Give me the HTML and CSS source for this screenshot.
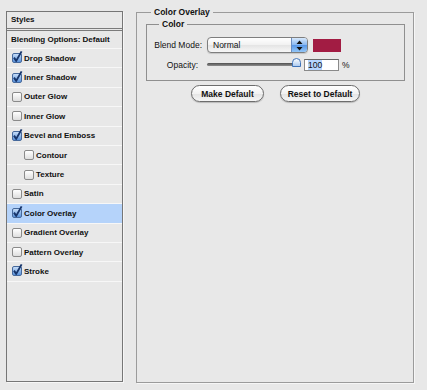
FILE: index.html
```html
<!DOCTYPE html>
<html lang="en">
<head>
    <meta charset="UTF-8">
    <meta name="viewport" content="width=device-width, initial-scale=1.0">
    <title>Layer Style - Color Overlay</title>
    <link rel="stylesheet" href="styles.css">
</head>
<body>
    <div class="styles-panel">
        <div class="panel-head">Styles</div>
        <div class="style-row blending">Blending Options: Default</div>
        <div class="style-row"><span class="check on"><svg width="10" height="10" viewBox="0 0 10 10"><path d="M2 4.6 L4.2 7.9 L9.6 -1.6" /></svg></span>Drop Shadow</div>
        <div class="style-row"><span class="check on"><svg width="10" height="10" viewBox="0 0 10 10"><path d="M2 4.6 L4.2 7.9 L9.6 -1.6" /></svg></span>Inner Shadow</div>
        <div class="style-row"><span class="check"></span>Outer Glow</div>
        <div class="style-row"><span class="check"></span>Inner Glow</div>
        <div class="style-row"><span class="check on"><svg width="10" height="10" viewBox="0 0 10 10"><path d="M2 4.6 L4.2 7.9 L9.6 -1.6" /></svg></span>Bevel and Emboss</div>
        <div class="style-row sub"><span class="check"></span>Contour</div>
        <div class="style-row sub"><span class="check"></span>Texture</div>
        <div class="style-row"><span class="check"></span>Satin</div>
        <div class="style-row active"><span class="check on"><svg width="10" height="10" viewBox="0 0 10 10"><path d="M2 4.6 L4.2 7.9 L9.6 -1.6" /></svg></span>Color Overlay</div>
        <div class="style-row"><span class="check"></span>Gradient Overlay</div>
        <div class="style-row"><span class="check"></span>Pattern Overlay</div>
        <div class="style-row"><span class="check on"><svg width="10" height="10" viewBox="0 0 10 10"><path d="M2 4.6 L4.2 7.9 L9.6 -1.6" /></svg></span>Stroke</div>
    </div>

    <fieldset class="options">
        <legend class="main-legend">Color Overlay</legend>
        <fieldset class="color-group">
            <legend class="group-legend">Color</legend>
            <div class="field-row blend-row">
                <label class="field-label">Blend Mode:</label>
                <div class="popup">
                    <span class="popup-text">Normal</span>
                    <span class="popup-arrows">
                        <svg width="7" height="11" viewBox="0 0 7 11"><path d="M3.5 0.5 L6.5 4 L0.5 4 Z M0.5 7 L6.5 7 L3.5 10.5 Z" fill="#111" /></svg>
                    </span>
                </div>
                <span class="swatch"></span>
            </div>
            <div class="field-row opacity-row">
                <label class="field-label opacity-label">Opacity:</label>
                <div class="slider">
                    <span class="track"></span>
                    <svg class="thumb" width="9" height="9" viewBox="0 0 9 9">
                        <defs>
                            <linearGradient id="thumbFill" x1="0" y1="0" x2="0" y2="1">
                                <stop offset="0" stop-color="#ffffff" />
                                <stop offset="1" stop-color="#a9c8ee" />
                            </linearGradient>
                        </defs>
                        <path d="M0.5 8.5 V4.5 Q0.5 0.5 4.5 0.5 Q8.5 0.5 8.5 4.5 V8.5 Z" fill="url(#thumbFill)" stroke="#3f73b8" />
                    </svg>
                </div>
                <span class="num-input"><span class="sel">100</span></span>
                <span class="unit">%</span>
            </div>
        </fieldset>
        <div class="buttons">
            <button class="make">Make Default</button>
            <button class="reset">Reset to Default</button>
        </div>
    </fieldset>
</body>
</html>
```

FILE: styles.css
```css
body {
    margin: 0;
    width: 427px;
    height: 390px;
    box-sizing: border-box;
    overflow: hidden;
    padding: 7px 0 0 6px;
    background-color: #e8e8e8;
    font-family: "Liberation Sans", Arial, sans-serif;
    color: #111;
    display: flex;
    align-items: flex-start;
    gap: 13px;
}

/* left list of layer styles */
.styles-panel {
    width: 117px;
    height: 371px;
    margin-top: 4px;
    box-sizing: border-box;
    border: 1px solid #767676;
    box-shadow: 1px 1px 0 #f6f6f6;
    font-size: 8px;
    font-weight: bold;
}
.panel-head {
    height: 16px;
    line-height: 16px;
    padding-left: 4px;
    border-bottom: 3px double #7b7b7b;
}
.style-row {
    height: 18.4px;
    display: flex;
    align-items: center;
    gap: 2px;
    padding-left: 5px;
    border-bottom: 1px solid #f7f7f7;
}
.style-row.blending {
    height: 17px;
    padding-left: 4px;
}
.style-row.sub {
    padding-left: 17px;
}
.style-row.active {
    background-color: #b5d3fa;
}
.check {
    flex: none;
    width: 10px;
    height: 10px;
    box-sizing: border-box;
    border: 1px solid #8a8a8a;
    border-radius: 2px;
    background: linear-gradient(#ffffff, #dedede);
}
.check.on {
    border-color: #46699c;
    background: linear-gradient(#c6ddf8, #5a93dc);
}
.check svg {
    display: block;
    margin: -1px;
    overflow: visible;
}
.check svg path {
    fill: none;
    stroke: #17356b;
    stroke-width: 1.9;
    stroke-linejoin: round;
}

/* right options box */
.options {
    margin: 0;
    padding: 0 8px 0 9px;
    width: 278px;
    height: 376px;
    box-sizing: border-box;
    min-width: 0;
    border: 1px solid #9b9b9b;
    box-shadow: 1px 1px 0 #f6f6f6;
    font-size: 8.5px;
}
.main-legend {
    padding: 0 3px;
    margin-left: 5px;
    line-height: 11px;
    font-weight: bold;
}
.color-group {
    margin: 1px 0 0;
    padding: 7px 0 9px;
    min-width: 0;
    border: 1px solid #8f8f8f;
}
.group-legend {
    padding: 0 3px;
    margin-left: 12px;
    line-height: 11px;
    font-weight: bold;
}
.field-row {
    display: flex;
    align-items: center;
}
.blend-row {
    height: 16px;
}
.opacity-row {
    height: 12px;
    margin-top: 6px;
}
.field-label {
    width: 55px;
    margin-right: 5px;
    text-align: right;
    flex: none;
}
.opacity-label {
    width: 51px;
    padding-right: 4px;
}
.popup {
    width: 101px;
    height: 16px;
    box-sizing: border-box;
    display: flex;
    overflow: hidden;
    border: 1px solid #7e7e7e;
    border-radius: 4px;
    background: linear-gradient(#ffffff, #f1f1f1 50%, #e4e4e4 51%, #f7f7f7);
    box-shadow: 0 1px 1px rgba(0, 0, 0, 0.15);
}
.popup-text {
    flex: 1;
    padding-left: 5px;
    line-height: 14px;
}
.popup-arrows {
    width: 15px;
    display: flex;
    align-items: center;
    justify-content: center;
    border-left: 1px solid #6a8cc0;
    background: linear-gradient(#d6e8fc, #88b7f0 50%, #5796e6 51%, #93c6f7);
}
.swatch {
    width: 28px;
    height: 13px;
    margin-left: 5px;
    background-color: #a21c43;
}
.slider {
    width: 94px;
    height: 12px;
    margin-right: 3px;
    display: flex;
    align-items: flex-start;
}
.track {
    flex: 1;
    height: 3px;
    margin-top: 4px;
    border-radius: 2px;
    background: linear-gradient(#4f4f4f, #8e8e8e);
}
.thumb {
    flex: none;
    margin: -1px 0 0 -4px;
}
.num-input {
    width: 35px;
    height: 12px;
    box-sizing: border-box;
    padding-left: 3px;
    line-height: 10px;
    border: 1px solid #8a8a8a;
    border-top-color: #666;
    background-color: #fff;
}
.sel {
    background-color: #b5d5ff;
}
.unit {
    margin-left: 3px;
}
.buttons {
    display: flex;
    justify-content: center;
    gap: 16px;
    margin-top: 4px;
}
.buttons button {
    height: 17px;
    padding: 0;
    border: 1px solid #6d6d6d;
    border-radius: 9px;
    background: linear-gradient(#ffffff, #f2f2f2 50%, #e3e3e3 51%, #f6f6f6);
    box-shadow: 0 1px 1px rgba(0, 0, 0, 0.2);
    font-family: "Liberation Sans", Arial, sans-serif;
    font-size: 8.5px;
    font-weight: bold;
    color: #111;
}
.buttons .make {
    width: 73px;
}
.buttons .reset {
    width: 80px;
}
```
